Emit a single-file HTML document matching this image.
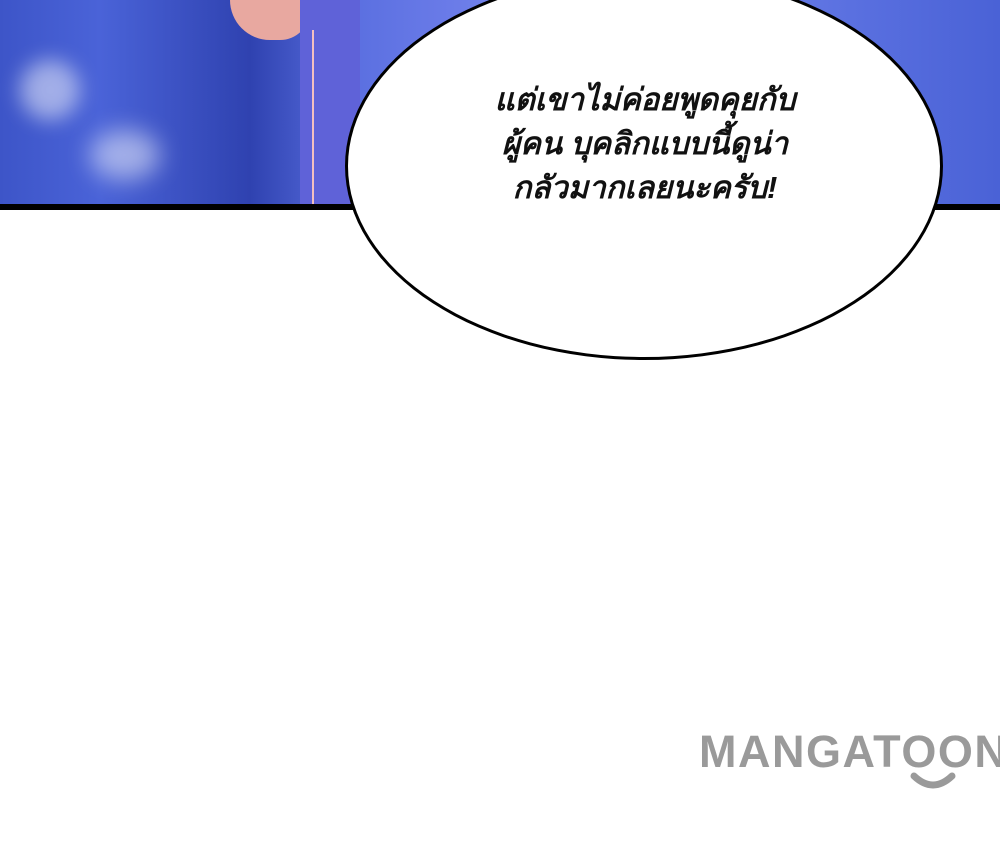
<!DOCTYPE html>
<html><head><meta charset="utf-8"><style>
html,body{margin:0;padding:0;width:1000px;height:844px;overflow:hidden;background:#fff}
.panel{position:absolute;left:0;top:0;width:1000px;height:205px;overflow:hidden;
background:linear-gradient(90deg,#3d55c8 0%,#4a63d8 10%,#2f42b0 25%,#5a6fe0 35%,#6a7be8 45%,#8090f0 60%,#5a70e0 85%,#4a62d6 100%)}
.line{position:absolute;left:0;top:204px;width:1000px;height:6px;background:#000}
.bubble{position:absolute;left:345px;top:-28px;width:598px;height:388px;border:3px solid #000;border-radius:50%;background:#fff;box-sizing:border-box}
.txt{position:absolute;left:420px;top:78px;width:450px;text-align:center;font-family:"Liberation Sans","DejaVu Sans",sans-serif;font-size:31px;font-weight:bold;line-height:44px;color:#111;font-style:italic}
.logo{position:absolute;left:699px;top:726px;font-family:"Liberation Sans",sans-serif;font-weight:bold;font-size:45px;color:#9a9a9a;letter-spacing:1.5px}
</style></head><body>
<div class="panel">
<div style="position:absolute;left:230px;top:-20px;width:80px;height:60px;background:#e8a8a0;border-radius:0 0 30px 40px"></div>
<div style="position:absolute;left:300px;top:0;width:60px;height:205px;background:#5f62d8"></div>
<div style="position:absolute;left:312px;top:30px;width:2px;height:175px;background:#f3c0c0"></div>
<div style="position:absolute;left:20px;top:60px;width:60px;height:60px;background:rgba(255,255,255,.5);border-radius:50%;filter:blur(10px)"></div>
<div style="position:absolute;left:90px;top:130px;width:70px;height:50px;background:rgba(255,255,255,.5);border-radius:50%;filter:blur(12px)"></div>
</div>
<div class="line"></div>
<div class="bubble"></div>
<div class="txt">แต่เขาไม่ค่อยพูดคุยกับ<br>ผู้คน บุคลิกแบบนี้ดูน่า<br>กลัวมากเลยนะครับ!</div>
<div class="logo">MANGATOON</div>
<svg style="position:absolute;left:908px;top:772px" width="50" height="22"><path d="M6 4 Q25 22 44 4" stroke="#9a9a9a" stroke-width="7" fill="none" stroke-linecap="round"/></svg>
</body></html>
